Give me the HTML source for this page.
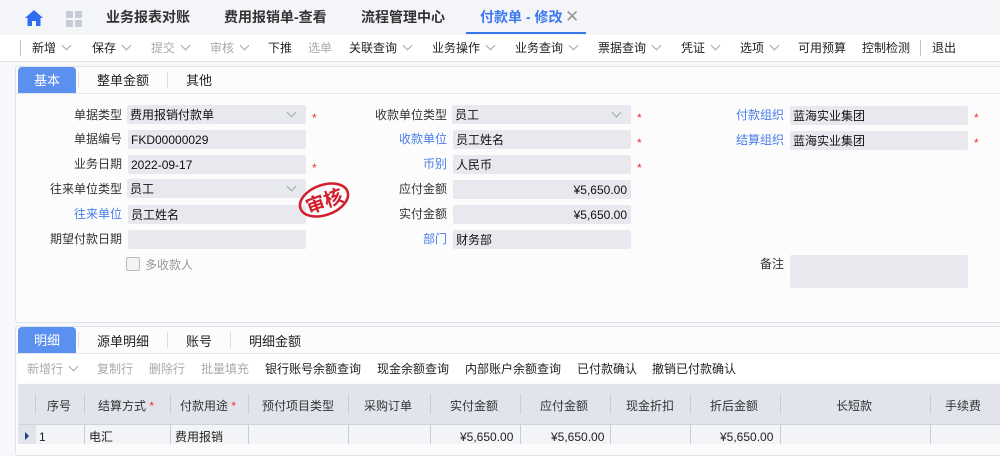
<!DOCTYPE html>
<html><head><meta charset="utf-8"><style>
*{margin:0;padding:0;box-sizing:border-box}
body{width:1000px;height:444px;overflow:hidden;background:#f7f8fa;font-family:"Liberation Sans","Noto Sans CJK SC",sans-serif;font-size:12px;line-height:18px;color:#222;position:relative}
.a{position:absolute;white-space:nowrap}
.tab{font-size:14px;font-weight:bold;color:#333;top:8px}
.tb{top:39px;color:#222}
.g{color:#aaa}
.ch{display:inline-block;width:7px;height:7px;border-right:1px solid #9aa;border-bottom:1px solid #9aa;transform:rotate(45deg);margin-left:7px;position:relative;top:-3px}
.cha{position:absolute;width:7px;height:7px;border-right:1px solid #9aa;border-bottom:1px solid #9aa;transform:rotate(45deg)}
.lab{text-align:right;width:110px;color:#333}
.blue{color:#4a7ee8}
.inp{background:#e7e9ee;height:19px;border-radius:2px;padding-left:3px;line-height:20px;color:#111}
.r{text-align:right;padding-right:4px}
.st{color:#e33;font-size:12px}
.hd{top:397px;color:#333}
.vl{position:absolute;width:1px;background:#c9ccd3}
</style></head><body>
<div class="a" style="left:0;top:0;width:1000px;height:35px;background:#f4f5f9"></div>
<svg class="a" style="left:25px;top:10px" width="18" height="16" viewBox="0 0 18 16"><path d="M9 0 L18 8 L15.5 8 L15.5 16 L11 16 L11 11 L7 11 L7 16 L2.5 16 L2.5 8 L0 8Z" fill="#2f6cf0"/></svg>
<div class="a" style="left:66px;top:11px;width:7px;height:7px;background:#c8ccd6;border-radius:1px"></div>
<div class="a" style="left:75px;top:11px;width:7px;height:7px;background:#c8ccd6;border-radius:1px"></div>
<div class="a" style="left:66px;top:20px;width:7px;height:7px;background:#c8ccd6;border-radius:1px"></div>
<div class="a" style="left:75px;top:20px;width:7px;height:7px;background:#c8ccd6;border-radius:1px"></div>
<div class="a tab" style="left:106px">业务报表对账</div>
<div class="a tab" style="left:224px">费用报销单-查看</div>
<div class="a tab" style="left:361px">流程管理中心</div>
<div class="a tab" style="left:480px;color:#3b78f0">付款单 - 修改</div>
<div class="a" style="left:565px;top:8px;font-size:17px;color:#999">✕</div>
<div class="a" style="left:466px;top:32px;width:120px;height:2px;background:#3b78f0"></div>
<div class="a" style="left:0;top:35px;width:1000px;height:27px;background:#fff;border-bottom:1px solid #dfe1e6"></div>
<div class="a" style="left:20px;top:40px;width:1px;height:16px;background:#b8c4dd"></div>
<div class="a tb" style="left:32px">新增<i class="ch"></i></div>
<div class="a tb" style="left:92px">保存<i class="ch"></i></div>
<div class="a tb g" style="left:151px">提交<i class="ch"></i></div>
<div class="a tb g" style="left:210px">审核<i class="ch"></i></div>
<div class="a tb" style="left:268px">下推</div>
<div class="a tb g" style="left:308px">选单</div>
<div class="a tb" style="left:349px">关联查询<i class="ch"></i></div>
<div class="a tb" style="left:432px">业务操作<i class="ch"></i></div>
<div class="a tb" style="left:515px">业务查询<i class="ch"></i></div>
<div class="a tb" style="left:598px">票据查询<i class="ch"></i></div>
<div class="a tb" style="left:681px">凭证<i class="ch"></i></div>
<div class="a tb" style="left:740px">选项<i class="ch"></i></div>
<div class="a tb" style="left:798px">可用预算</div>
<div class="a tb" style="left:862px">控制检测</div>
<div class="a" style="left:920px;top:40px;width:1px;height:16px;background:#b8c4dd"></div>
<div class="a tb" style="left:932px">退出</div>
<div class="a" style="left:15px;top:66px;width:990px;height:257px;background:#fcfcfd;border:1px solid #dfe2ea;border-radius:3px"></div>
<div class="a" style="left:16px;top:93px;width:984px;height:1px;background:#e3e6ed"></div>
<div class="a" style="left:18px;top:67px;width:58px;height:26px;background:#5b8ff0;border-radius:4px 4px 0 0;color:#fff;text-align:center;line-height:28px;font-size:13px">基本</div>
<div class="a" style="left:78px;top:72px;width:1px;height:16px;background:#ddd"></div>
<div class="a" style="left:97px;top:72px;font-size:13px">整单金额</div>
<div class="a" style="left:167px;top:72px;width:1px;height:16px;background:#ddd"></div>
<div class="a" style="left:186px;top:72px;font-size:13px">其他</div>
<div class="a lab" style="left:12px;top:106px">单据类型</div><div class="a inp" style="left:127px;top:105px;width:179px">费用报销付款单</div><i class="cha" style="left:288px;top:109px"></i><div class="a st" style="left:312px;top:109px">*</div>
<div class="a lab" style="left:12px;top:130px">单据编号</div><div class="a inp" style="left:128px;top:130px;width:178px">FKD00000029</div>
<div class="a lab" style="left:12px;top:155px">业务日期</div><div class="a inp" style="left:128px;top:155px;width:178px">2022-09-17</div><div class="a st" style="left:312px;top:159px">*</div>
<div class="a lab" style="left:12px;top:180px">往来单位类型</div><div class="a inp" style="left:127px;top:179px;width:179px">员工</div><i class="cha" style="left:288px;top:183px"></i>
<div class="a lab blue" style="left:12px;top:205px">往来单位</div><div class="a inp" style="left:128px;top:205px;width:178px">员工姓名</div>
<div class="a lab" style="left:12px;top:230px">期望付款日期</div><div class="a inp" style="left:128px;top:230px;width:178px"></div>
<div class="a" style="left:126px;top:257px;width:14px;height:14px;border:1px solid #bbb;border-radius:2px;background:#f2f3f5"></div>
<div class="a" style="left:145px;top:256px;color:#999">多收款人</div>
<svg class="a" style="left:296px;top:180px" width="56" height="40" viewBox="0 0 56 40"><ellipse cx="28" cy="20" rx="25" ry="15" transform="rotate(-20 28 20)" fill="none" stroke="#d21f2b" stroke-width="2.5"/><text x="28" y="28" text-anchor="middle" font-size="19" font-weight="bold" fill="#d21f2b" transform="rotate(-20 28 20)" font-family="Noto Sans CJK SC">审核</text></svg>
<div class="a lab" style="left:337px;top:106px">收款单位类型</div><div class="a inp" style="left:452px;top:105px;width:179px">员工</div><i class="cha" style="left:613px;top:109px"></i><div class="a st" style="left:637px;top:109px">*</div>
<div class="a lab blue" style="left:337px;top:130px">收款单位</div><div class="a inp" style="left:453px;top:130px;width:178px">员工姓名</div><div class="a st" style="left:637px;top:134px">*</div>
<div class="a lab blue" style="left:337px;top:155px">币别</div><div class="a inp" style="left:453px;top:155px;width:178px">人民币</div><div class="a st" style="left:637px;top:159px">*</div>
<div class="a lab" style="left:337px;top:180px">应付金额</div><div class="a inp r" style="left:453px;top:180px;width:178px">¥5,650.00</div>
<div class="a lab" style="left:337px;top:205px">实付金额</div><div class="a inp r" style="left:453px;top:205px;width:178px">¥5,650.00</div>
<div class="a lab blue" style="left:337px;top:230px">部门</div><div class="a inp" style="left:453px;top:230px;width:178px">财务部</div>
<div class="a lab blue" style="left:674px;top:106px">付款组织</div><div class="a inp" style="left:790px;top:106px;width:178px">蓝海实业集团</div><div class="a st" style="left:974px;top:109px">*</div>
<div class="a lab blue" style="left:674px;top:131px">结算组织</div><div class="a inp" style="left:790px;top:131px;width:178px">蓝海实业集团</div><div class="a st" style="left:974px;top:134px">*</div>
<div class="a lab" style="left:674px;top:255px">备注</div><div class="a inp" style="left:790px;top:255px;width:178px;height:33px"></div>
<div class="a" style="left:15px;top:326px;width:990px;height:130px;background:#fcfcfd;border:1px solid #dfe2ea;border-radius:3px"></div>
<div class="a" style="left:16px;top:353px;width:984px;height:1px;background:#e3e6ed"></div>
<div class="a" style="left:18px;top:327px;width:58px;height:26px;background:#5b8ff0;border-radius:4px 4px 0 0;color:#fff;text-align:center;line-height:28px;font-size:13px">明细</div>
<div class="a" style="left:78px;top:332px;width:1px;height:16px;background:#ddd"></div>
<div class="a" style="left:97px;top:333px;font-size:13px">源单明细</div>
<div class="a" style="left:167px;top:332px;width:1px;height:16px;background:#ddd"></div>
<div class="a" style="left:186px;top:333px;font-size:13px">账号</div>
<div class="a" style="left:230px;top:332px;width:1px;height:16px;background:#ddd"></div>
<div class="a" style="left:249px;top:333px;font-size:13px">明细金额</div>
<div class="a" style="left:18px;top:354px;width:982px;height:28px;background:#fff"></div>
<div class="a g" style="left:27px;top:360px">新增行<i class="ch"></i></div>
<div class="a g" style="left:97px;top:360px">复制行</div>
<div class="a g" style="left:149px;top:360px">删除行</div>
<div class="a g" style="left:201px;top:360px">批量填充</div>
<div class="a" style="left:265px;top:360px">银行账号余额查询</div>
<div class="a" style="left:377px;top:360px">现金余额查询</div>
<div class="a" style="left:465px;top:360px">内部账户余额查询</div>
<div class="a" style="left:577px;top:360px">已付款确认</div>
<div class="a" style="left:652px;top:360px">撤销已付款确认</div>
<div class="a" style="left:18px;top:384px;width:982px;height:40px;background:#e1e4ec"></div>
<div class="a" style="left:18px;top:424px;width:982px;height:1px;background:#cfd3dc"></div>
<div class="a" style="left:18px;top:425px;width:982px;height:19px;background:#f3f4f7"></div>
<div class="a" style="left:18px;top:425px;width:18px;height:19px;background:#e1e4ec"></div>
<div class="vl" style="left:35px;top:394px;height:20px"></div>
<div class="vl" style="left:84px;top:394px;height:20px"></div><div class="vl" style="left:84px;top:425px;height:19px"></div>
<div class="vl" style="left:170px;top:394px;height:20px"></div><div class="vl" style="left:170px;top:425px;height:19px"></div>
<div class="vl" style="left:248px;top:394px;height:20px"></div><div class="vl" style="left:248px;top:425px;height:19px"></div>
<div class="vl" style="left:348px;top:394px;height:20px"></div><div class="vl" style="left:348px;top:425px;height:19px"></div>
<div class="vl" style="left:430px;top:394px;height:20px"></div><div class="vl" style="left:430px;top:425px;height:19px"></div>
<div class="vl" style="left:520px;top:394px;height:20px"></div><div class="vl" style="left:520px;top:425px;height:19px"></div>
<div class="vl" style="left:610px;top:394px;height:20px"></div><div class="vl" style="left:610px;top:425px;height:19px"></div>
<div class="vl" style="left:690px;top:394px;height:20px"></div><div class="vl" style="left:690px;top:425px;height:19px"></div>
<div class="vl" style="left:780px;top:394px;height:20px"></div><div class="vl" style="left:780px;top:425px;height:19px"></div>
<div class="vl" style="left:930px;top:394px;height:20px"></div><div class="vl" style="left:930px;top:425px;height:19px"></div>
<div class="a hd" style="left:47px">序号</div>
<div class="a hd" style="left:98px">结算方式 <span class="st">*</span></div>
<div class="a hd" style="left:180px">付款用途 <span class="st">*</span></div>
<div class="a hd" style="left:262px">预付项目类型</div>
<div class="a hd" style="left:364px">采购订单</div>
<div class="a hd" style="left:450px">实付金额</div>
<div class="a hd" style="left:540px">应付金额</div>
<div class="a hd" style="left:626px">现金折扣</div>
<div class="a hd" style="left:710px">折后金额</div>
<div class="a hd" style="left:836px">长短款</div>
<div class="a hd" style="left:945px">手续费</div>
<div class="a" style="left:25px;top:432px;width:0;height:0;border-left:4px solid #1d3f7a;border-top:4px solid transparent;border-bottom:4px solid transparent"></div>
<div class="a" style="left:39px;top:428px">1</div>
<div class="a" style="left:89px;top:428px">电汇</div>
<div class="a" style="left:175px;top:428px">费用报销</div>
<div class="a" style="left:460px;top:428px">¥5,650.00</div>
<div class="a" style="left:551px;top:428px">¥5,650.00</div>
<div class="a" style="left:720px;top:428px">¥5,650.00</div>
</body></html>
